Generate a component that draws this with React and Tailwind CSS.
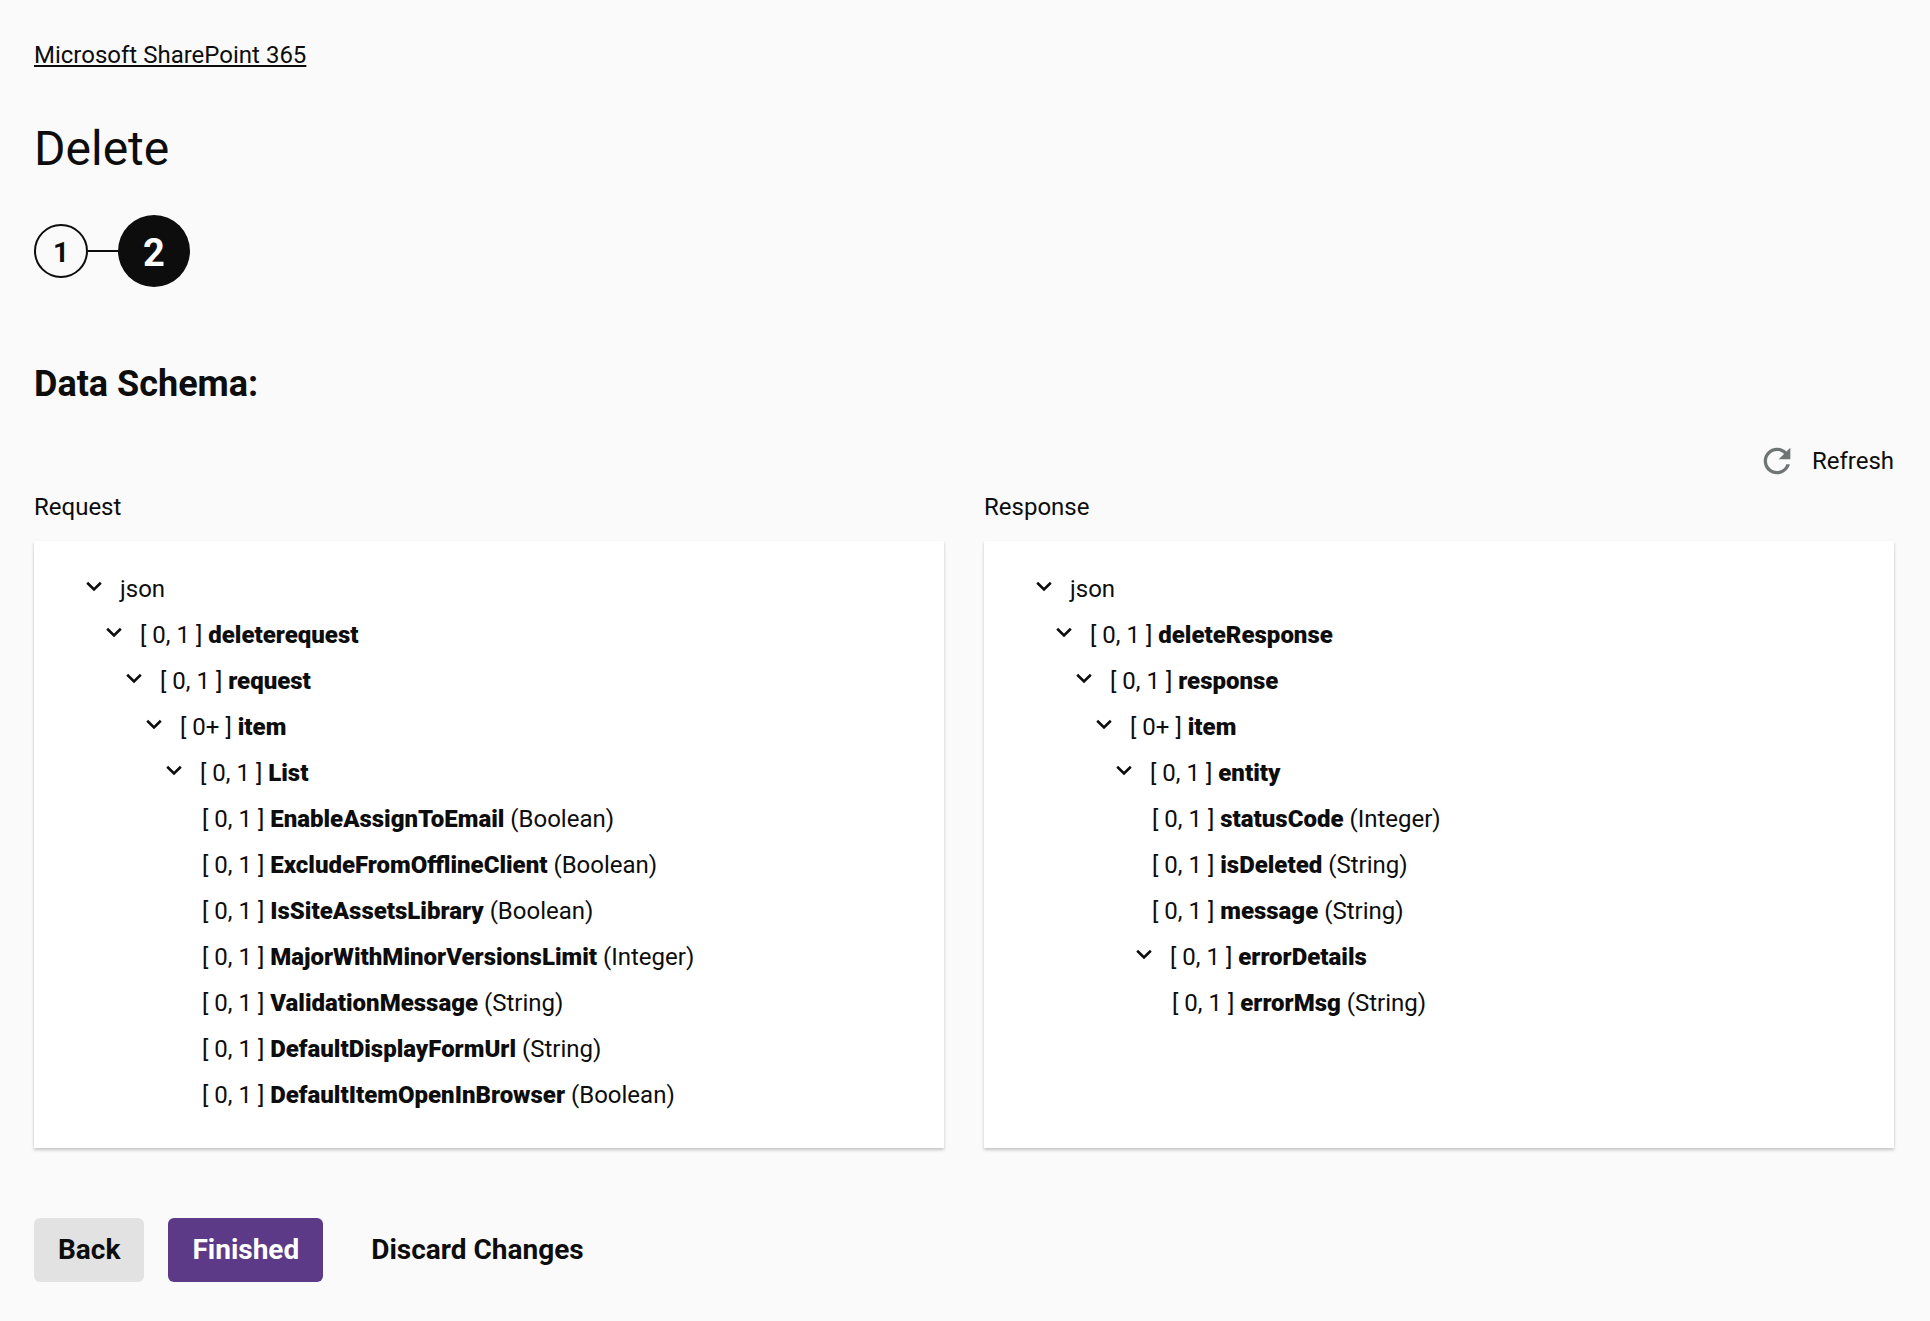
import { useState } from 'react';

const requestSchema = {
    name: 'json',
    children: [
        {
            name: 'deleterequest',
            range: '[ 0, 1 ]',
            children: [
                {
                    name: 'request',
                    range: '[ 0, 1 ]',
                    children: [
                        {
                            name: 'item',
                            range: '[ 0+ ]',
                            children: [
                                {
                                    name: 'List',
                                    range: '[ 0, 1 ]',
                                    children: [
                                        { name: 'EnableAssignToEmail', range: '[ 0, 1 ]', type: 'Boolean' },
                                        { name: 'ExcludeFromOfflineClient', range: '[ 0, 1 ]', type: 'Boolean' },
                                        { name: 'IsSiteAssetsLibrary', range: '[ 0, 1 ]', type: 'Boolean' },
                                        { name: 'MajorWithMinorVersionsLimit', range: '[ 0, 1 ]', type: 'Integer' },
                                        { name: 'ValidationMessage', range: '[ 0, 1 ]', type: 'String' },
                                        { name: 'DefaultDisplayFormUrl', range: '[ 0, 1 ]', type: 'String' },
                                        { name: 'DefaultItemOpenInBrowser', range: '[ 0, 1 ]', type: 'Boolean' },
                                    ],
                                },
                            ],
                        },
                    ],
                },
            ],
        },
    ],
};

const responseSchema = {
    name: 'json',
    children: [
        {
            name: 'deleteResponse',
            range: '[ 0, 1 ]',
            children: [
                {
                    name: 'response',
                    range: '[ 0, 1 ]',
                    children: [
                        {
                            name: 'item',
                            range: '[ 0+ ]',
                            children: [
                                {
                                    name: 'entity',
                                    range: '[ 0, 1 ]',
                                    children: [
                                        { name: 'statusCode', range: '[ 0, 1 ]', type: 'Integer' },
                                        { name: 'isDeleted', range: '[ 0, 1 ]', type: 'String' },
                                        { name: 'message', range: '[ 0, 1 ]', type: 'String' },
                                        {
                                            name: 'errorDetails',
                                            range: '[ 0, 1 ]',
                                            children: [{ name: 'errorMsg', range: '[ 0, 1 ]', type: 'String' }],
                                        },
                                    ],
                                },
                            ],
                        },
                    ],
                },
            ],
        },
    ],
};

const TreeNode = ({ node }) => {
    const [open, setOpen] = useState(true);

    const label = node.range ? (
        <span>
            {node.range} <b className="font-black">{node.name}</b>
            {node.type && ` (${node.type})`}
        </span>
    ) : (
        <span>{node.name}</span>
    );

    if (!node.children) {
        return <li className="h-[46px] pl-6 leading-[46px] whitespace-nowrap">{label}</li>;
    }

    return (
        <li>
            <div className="flex h-[46px] items-center gap-[10px] leading-[46px] whitespace-nowrap">
                <button
                    type="button"
                    aria-label={`Toggle ${node.name}`}
                    aria-expanded={open}
                    className="flex h-8 w-8 cursor-pointer items-center justify-center"
                    onClick={() => setOpen(!open)}
                >
                    <svg viewBox="0 0 32 32" className={open ? 'h-8 w-8' : 'h-8 w-8 -rotate-90'} fill="none" stroke="currentColor" strokeWidth="2.6">
                        <path d="M9.2 9.8 16 16.4 22.8 9.8" />
                    </svg>
                </button>
                {label}
            </div>
            {open && (
                <ul className="pl-5">
                    {node.children.map((child) => (
                        <TreeNode key={child.name} node={child} />
                    ))}
                </ul>
            )}
        </li>
    );
};

const SchemaPanel = ({ title, schema }) => (
    <section className="flex flex-col">
        <h3 className="mb-[18px] leading-8">{title}</h3>
        <div className="grow bg-white pt-[25px] pb-[30px] pl-11 shadow-[0_2px_3px_rgba(0,0,0,0.22)]">
            <ul>
                <TreeNode node={schema} />
            </ul>
        </div>
    </section>
);

const App = () => {
    return (
        <main className="min-h-screen bg-[#fafafa] pt-[39px] pr-9 pb-9 pl-[34px] font-['Roboto',sans-serif] text-2xl text-[#0d0d0d]">
            <a href="#" className="block w-fit leading-8 underline decoration-2 underline-offset-2">
                Microsoft SharePoint 365
            </a>

            <h1 className="mt-12 text-5xl leading-[60px]">Delete</h1>

            <ol className="mt-9 flex items-center font-bold">
                <li className="flex items-center">
                    <span className="flex h-[54px] w-[54px] items-center justify-center rounded-full border-2 border-[#0d0d0d] pt-1 text-[28px]">1</span>
                    <span className="h-[2px] w-[30px] bg-[#0d0d0d]" />
                </li>
                <li className="flex h-[72px] w-[72px] items-center justify-center rounded-full bg-[#0d0d0d] pt-1 text-[38px] text-white">2</li>
            </ol>

            <h2 className="mt-[77px] text-4xl leading-10 font-bold">Data Schema:</h2>

            <div className="mt-[37px] flex justify-end">
                <button type="button" className="flex cursor-pointer items-center gap-[15px]">
                    <svg viewBox="0 0 24 24" className="h-10 w-10 fill-[#6f7575]">
                        <path d="M17.65 6.35A7.958 7.958 0 0 0 12 4c-4.42 0-7.99 3.58-7.99 8s3.57 8 7.99 8c3.73 0 6.84-2.55 7.73-6h-2.08A5.99 5.99 0 0 1 12 18c-3.31 0-6-2.69-6-6s2.69-6 6-6c1.66 0 3.14.69 4.22 1.78L13 11h7V4l-2.35 2.35z" />
                    </svg>
                    Refresh
                </button>
            </div>

            <div className="mt-[10px] grid grid-cols-2 gap-10">
                <SchemaPanel title="Request" schema={requestSchema} />
                <SchemaPanel title="Response" schema={responseSchema} />
            </div>

            <div className="mt-[70px] flex gap-6 text-[28px] font-bold">
                <button type="button" className="h-16 cursor-pointer rounded-md bg-[#e2e2e2] px-6">Back</button>
                <button type="button" className="h-16 cursor-pointer rounded-md bg-[#5c3a87] px-6 text-white">Finished</button>
                <button type="button" className="h-16 cursor-pointer rounded-md px-6">Discard Changes</button>
            </div>
        </main>
    );
};

export default App;
